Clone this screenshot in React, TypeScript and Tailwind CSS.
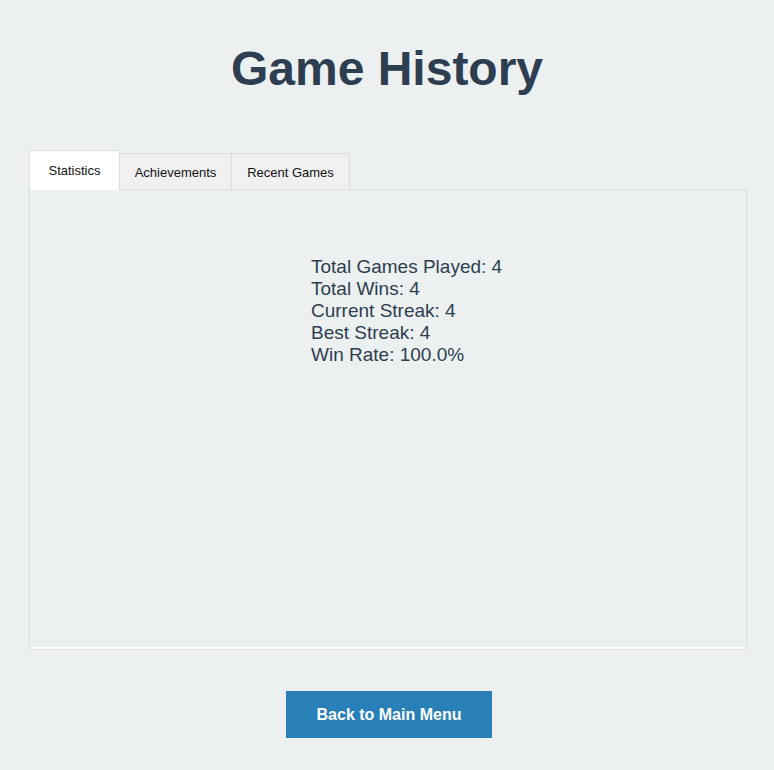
import { FC, useState } from "react";

const tabs = [
  { label: "Statistics", w: "w-[91px]" },
  { label: "Achievements", w: "w-[113px]" },
  { label: "Recent Games", w: "w-[119px]" },
];

const stats = [
  "Total Games Played: 4",
  "Total Wins: 4",
  "Current Streak: 4",
  "Best Streak: 4",
  "Win Rate: 100.0%",
];

const App: FC = () => {
  const [active, setActive] = useState(0);

  return (
    <div className="min-h-[770px] bg-[#ecf0f1] font-['Liberation_Sans',Arial,sans-serif] text-[#2c3e50]">
      <div className="pt-[41px] text-center">
        <h1 className="text-[48px] font-bold leading-[55px]">Game History</h1>
      </div>

      <div className="ml-[29px] mt-[54px] w-[718px]">
        <div className="relative z-10 -mb-px flex items-end">
          {tabs.map((t, i) =>
            i === active ? (
              <button
                key={t.label}
                onClick={() => setActive(i)}
                className={`${t.w} relative z-10 h-[40px] border border-b-0 border-[#dddddd] bg-white pt-[1px] text-[13px] text-[#111]`}
              >
                {t.label}
              </button>
            ) : (
              <button
                key={t.label}
                onClick={() => setActive(i)}
                className={`${t.w} -ml-px h-[37px] border border-[#dddddd] bg-[#f0f0f0] pt-[2px] text-[13px] text-[#111] first:ml-0`}
              >
                {t.label}
              </button>
            )
          )}
        </div>
        <div className="h-[461px] border border-[#dddddd] shadow-[inset_0_-2px_0_#ffffff]">
          {active === 0 && (
            <div className="pl-[281px] pt-[66px] text-[19px] leading-[22px]">
              {stats.map((s) => (
                <div key={s}>{s}</div>
              ))}
            </div>
          )}
        </div>
      </div>

      <div className="mt-[41px] flex justify-center pl-[4px]">
        <button className="h-[47px] w-[206px] bg-[#2980b9] text-[16px] font-bold text-white">
          Back to Main Menu
        </button>
      </div>
    </div>
  );
};

export default App;
